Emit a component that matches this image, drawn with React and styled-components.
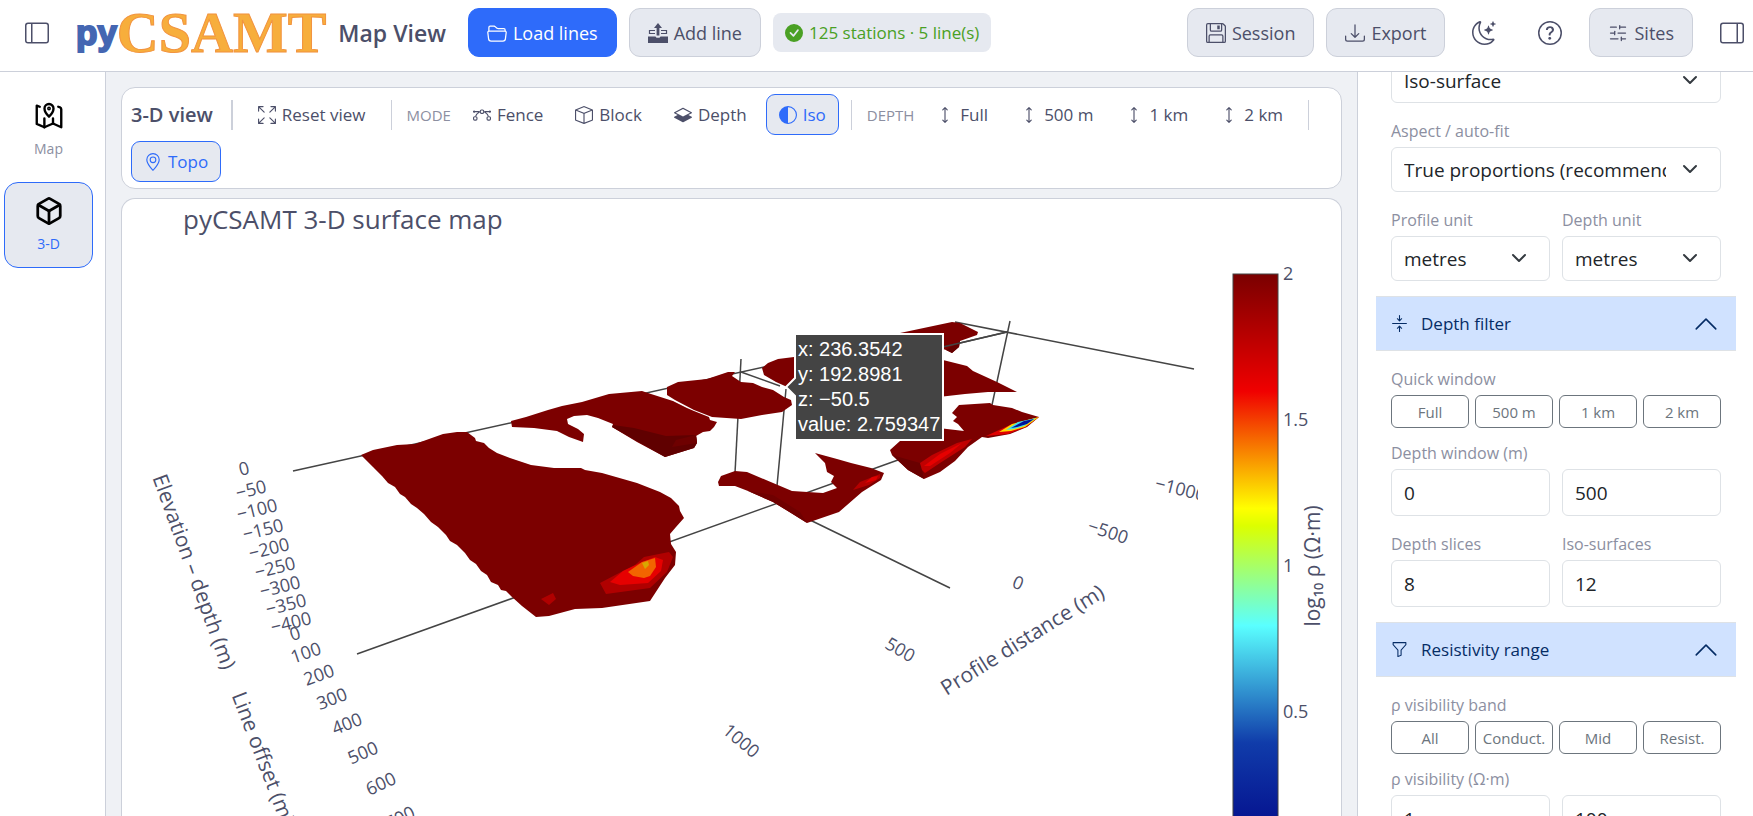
import React from 'react'
import styled, { createGlobalStyle, css } from 'styled-components'
import { SlidersHorizontal, Box } from 'lucide-react'
import {
  BsArrowsCollapse,
  BsArrowsFullscreen,
  BsArrowsVertical,
  BsBezier,
  BsBox,
  BsCheckCircleFill,
  BsChevronUp,
  BsCircleHalf,
  BsDownload,
  BsFloppy,
  BsFolder2Open,
  BsFunnel,
  BsGeoAlt,
  BsLayersHalf,
  BsLayoutSidebar,
  BsLayoutSidebarReverse,
  BsMoonStars,
  BsQuestionCircle
} from 'react-icons/bs'

let text = '#4c4f69'
let muted = '#8c8fa1'
let border = '#ccd0da'
let surface = '#e6e9f0'
let base = '#eff1f5'
let blue = '#2e6bfa'
let maroon = '#7c0000'

let GlobalStyle = createGlobalStyle`
  * {
    box-sizing: border-box;
  }

  body {
    margin: 0;
    background: ${base};
    color: ${text};
    font-family: 'Open Sans', 'Noto Sans', sans-serif;
    font-size: 17px;
  }

  button,
  input,
  select {
    font-family: inherit;
  }

  svg {
    display: block;
    flex-shrink: 0;
  }
`

let AddLineIcon = () => (
  <svg width="20" height="20" viewBox="0 0 20 20" fill="none" stroke="currentColor">
    <path d="M10 0l4 5h-2.600v7.500H8.600V5H6z" fill="currentColor" stroke="none" />
    <path d="M7 7.500H1.500v3H7M13 7.500h5.500v3H13" strokeWidth="1.200" />
    <path d="M0 13.500h7.500l1 1.200h3l1-1.200H20V20H0z" fill="currentColor" stroke="none" />
  </svg>
)

let MapIcon = () => (
  <svg width="30" height="30" viewBox="0 0 24 24" fill="none" stroke="#000" strokeWidth="1.9" strokeLinecap="round" strokeLinejoin="round">
    <path d="M4.6 4.6 2.2 3.7v14.6L8.3 21l6.9-3 6.6 3V6.6a1.6 1.6 0 0 0-1-1.5l-1.4-.5" />
    <path d="M8.3 14v7M15.2 14v4" />
    <path d="M12 12.5C9.8 10.4 8.4 8.4 8.4 6a3.6 3.6 0 0 1 7.2 0c0 2.4-1.4 4.4-3.6 6.5z" />
    <circle cx="12" cy="6" r=".6" />
  </svg>
)

let modes = [
  { name: 'Fence', Icon: BsBezier },
  { name: 'Block', Icon: BsBox },
  { name: 'Depth', Icon: BsLayersHalf },
  { name: 'Iso', Icon: BsCircleHalf, active: true }
]

let depths = ['Full', '500 m', '1 km', '2 km']
let bands = ['All', 'Conduct.', 'Mid', 'Resist.']

// x, y, rotation, label
let ticks = [
  [244, 469, -14, '0'],
  [251, 490, -14, '−50'],
  [257, 510, -14, '−100'],
  [263, 530, -14, '−150'],
  [269, 549, -14, '−200'],
  [275, 568, -14, '−250'],
  [280, 587, -14, '−300'],
  [286, 605, -14, '−350'],
  [291, 623, -14, '−400'],
  [295, 634, -18, '0'],
  [306, 653, -19, '100'],
  [319, 675, -20, '200'],
  [332, 699, -21, '300'],
  [347, 724, -22, '400'],
  [363, 753, -24, '500'],
  [381, 784, -25, '600'],
  [400, 818, -26, '700'],
  [741, 741, 40, '1000'],
  [900, 650, 30, '500'],
  [1018, 583, 22, '0'],
  [1108, 532, 18, '−500']
]

let axes = [
  'M293 471L800 359',
  'M930 350L1007 332',
  'M955 322L1194 369',
  'M1010 321L992 405',
  'M741 359L735 473',
  'M786 389L777 486',
  'M741 372L780 386',
  'M357 654L898 460',
  'M810 520L950 588'
]

let bodies = [
  'M361 455L373 450 397 445 415 444 443 434 457 432 467 432 475 438 476 441 484 443 489 448 497 453 510 458 531 465 554 468 581 468 585 470 602 473 637 483 660 492 671 498 679 506 680 511 684 518 676 527 670 534 671 544 676 552 675 565 665 578 650 601 602 608 575 609 549 616 536 617 522 606 512 597 506 591 501 590 498 585 491 582 487 575 481 571 476 564 470 560 465 553 457 545 450 541 446 535 438 527 431 522 424 514 417 508 411 504 405 497 400 494 395 487 388 483 382 476 373 467z',
  'M511 421L526 417 548 410 562 406 582 402 609 394 642 391 651 394 673 401 687 408 694 411 709 417 710 420 717 422 714 427 710 431 703 432 696 436 697 443 694 448 665 457 637 442 612 427 613 424 598 418 587 415 574 416 567 419 568 424 578 429 584 434 583 442 569 437 557 431 534 428 512 427z',
  'M667 387L678 382 707 379 728 372 735 372 732 376 741 382 753 383 762 387 773 390 784 397 791 400 792 405 782 412 762 415 741 419 712 417 694 410 675 400 667 395z',
  'M762 368L768 363 778 359 794 357 801 356 801 392 788 389 785 386 776 382 764 375z',
  'M900 333L952 322 960 323 968 327 978 332 977 335 960 341 959 347 952 353 946 350 940 348z',
  'M930 357L943 360 967 366 973 371 997 382 1017 392 988 392 965 394 930 398z',
  'M930 427L964 431 958 424 953 421 957 417 952 413 959 405 990 403 993 405 1012 408 1022 412 1039 417 1027 427 1010 434 988 438 982 437 968 447 955 461 940 472 924 479 908 470 892 455 890 450 900 441z',
  'M718 482L721 476 735 471 747 472 766 480 792 491 823 493 837 488 831 482 834 476 827 472 825 463 815 453 837 459 851 463 871 468 884 473 881 480 862 492 839 512 807 523 791 513 773 502 748 491 735 486 719 486z'
]

let facets = [
  ['#600000', 'M613 425L634 428 666 436 696 435 697 443 694 448 665 457 612 427z'],
  ['#6e0000', 'M676 440L696 435 697 443 672 447z'],
  ['#640000', 'M946 350L960 341 959 347 952 353z'],
  ['#700000', 'M748 491L773 495 800 512 807 523 791 513 773 502z'],
  ['#b00000', 'M600 583L621 572 635 565 644 557 669 552 673 557 667 572 650 588 606 594z'],
  ['#e60000', 'M610 582L623 571 640 563 655 557 663 560 661 571 648 583 620 585z'],
  ['#f26400', 'M628 572L642 562 655 558 656 567 650 576 644 578 633 576z'],
  ['#d9a800', 'M642 563L648 561 649 565 645 569z'],
  ['#b00000', 'M541 599L553 593 556 599 549 605z'],
  ['#6a0000', 'M892 455L920 463 922 470 924 479 908 470z'],
  ['#c00000', 'M920 463L932 455 957 443 972 439 965 447 940 463 925 473 922 470z'],
  ['#e60000', 'M924 466L940 454 962 443 950 453 930 466z'],
  ['#b40000', 'M853 490L860 482 880 474 880 478 869 485z'],
  ['#e00000', 'M865 483L872 477 878 476 876 480z'],
  ['#e00000', 'M986 436L1010 425 1039 417 1026 427 1008 434z'],
  ['#ffd800', 'M999 432L1012 424 1039 417 1025 427 1011 431z'],
  ['#3fe0e8', 'M1006 430L1018 422 1036 418 1024 426 1014 429z'],
  ['#00109a', 'M1011 428L1024 421 1034 419 1027 424 1017 427z']
]

let hoverLines = ['x: 236.3542', 'y: 192.8981', 'z: −50.5', 'value: 2.759347']

let scale = [
  [0, 'rgb(122, 0, 0)'],
  [0.2, 'rgb(240, 0, 0)'],
  [0.4, 'rgb(255, 255, 0)'],
  [0.43, 'rgb(220, 255, 0)'],
  [0.6, 'rgb(90, 255, 255)'],
  [0.8, 'rgb(16, 60, 170)'],
  [1, 'rgb(0, 0, 131)']
]

let Plot = () => (
  <StyledPlot viewBox="122 199 1219 617" role="img" aria-label="3-D surface map">
    <defs>
      <linearGradient id="jet" x1="0" y1="0" x2="0" y2="1">
        {scale.map(([offset, color]) => <stop key={offset} offset={offset} stopColor={color} />)}
      </linearGradient>
      <clipPath id="scene">
        <rect x="122" y="199" width="1076" height="700" />
      </clipPath>
    </defs>
    <text className="title" x="183" y="229">pyCSAMT 3-D surface map</text>
    <g clipPath="url(#scene)">
      {axes.map(d => <path key={d} d={d} stroke="#444" strokeWidth="1.5" />)}
      {bodies.map(d => <path key={d} d={d} fill={maroon} />)}
      {facets.map(([fill, d]) => <path key={d} d={d} fill={fill} />)}
      <path d="M930 350L1007 332" stroke="#444" strokeWidth="1.5" />
      {ticks.map(([x, y, angle, label]) => (
        <text className="tick" key={x + label} transform={`translate(${x} ${y}) rotate(${angle})`} textAnchor="middle" dy="6">{label}</text>
      ))}
      <text className="tick" transform="translate(1154 489) rotate(14)">−1000</text>
      <text className="axis" transform="translate(193 572) rotate(70)" textAnchor="middle" dy="6">Elevation – depth (m)</text>
      <text className="axis" transform="translate(237 693) rotate(69)" dy="6">Line offset (m)</text>
      <text className="axis" transform="translate(1023 641) rotate(-32)" textAnchor="middle" dy="6">Profile distance (m)</text>
    </g>
    <rect x="1233" y="274" width="45" height="586" fill="url(#jet)" stroke="#444" />
    {['2', '1.5', '1', '0.5'].map((label, i) => (
      <text className="tick" key={label} x="1283" y={280 + i * 146}>{label}</text>
    ))}
    <text className="axis" transform="translate(1320 566) rotate(-90)" textAnchor="middle">log₁₀ ρ (Ω·m)</text>
    <path d="M795 334H943V440H795V396L786 387 795 378Z" fill="#444" stroke="#fff" strokeWidth="2" />
    {hoverLines.map((line, i) => (
      <text className="hover" key={line} x="798" y={356 + i * 25}>{line}</text>
    ))}
  </StyledPlot>
)

let SelectField = ({ id, label, value }) => (
  <Field>
    {label ? <Label htmlFor={id}>{label}</Label> : null}
    <SelectWrapper>
      <Select id={id} defaultValue={value} aria-label={label || 'Render mode'}>
        <option>{value}</option>
      </Select>
      <svg width="16" height="16" viewBox="0 0 16 16" fill="none" stroke="#343a40" strokeWidth="2" strokeLinecap="round" strokeLinejoin="round">
        <path d="m2 5 6 6 6-6" />
      </svg>
    </SelectWrapper>
  </Field>
)

let InputField = ({ id, label, value }) => (
  <Field>
    <Label htmlFor={id}>{label}</Label>
    <Input id={id} defaultValue={value} />
  </Field>
)

let RangeField = ({ id, label, from, to }) => (
  <Field $tight>
    <Label htmlFor={id}>{label}</Label>
    <Pair>
      <Input id={id} defaultValue={from} />
      <Input defaultValue={to} aria-label={`${label} maximum`} />
    </Pair>
  </Field>
)

let Presets = ({ label, items }) => (
  <Field role="group" aria-label={label}>
    <Label as="span">{label}</Label>
    <PresetRow>
      {items.map(item => <Preset key={item}>{item}</Preset>)}
    </PresetRow>
  </Field>
)

let App = () => (
  <Page>
    <GlobalStyle />
    <Header>
      <IconButton aria-label="Toggle navigation"><BsLayoutSidebar size={24} /></IconButton>
      <Logo><span>py</span>CSAMT</Logo>
      <Title>Map View</Title>
      <HeaderButton $primary><BsFolder2Open size={20} />Load lines</HeaderButton>
      <HeaderButton><AddLineIcon />Add line</HeaderButton>
      <Status><BsCheckCircleFill size={18} />125 stations · 5 line(s)</Status>
      <Actions>
        <HeaderButton><BsFloppy size={20} />Session</HeaderButton>
        <HeaderButton><BsDownload size={20} />Export</HeaderButton>
        <IconButton aria-label="Dark theme"><BsMoonStars size={24} /></IconButton>
        <IconButton aria-label="Help"><BsQuestionCircle size={24} /></IconButton>
        <HeaderButton><SlidersHorizontal size={20} strokeWidth={1.5} />Sites</HeaderButton>
        <IconButton $edge aria-label="Toggle settings"><BsLayoutSidebarReverse size={24} /></IconButton>
      </Actions>
    </Header>
    <Body>
      <Nav>
        <NavItem href="#map"><MapIcon />Map</NavItem>
        <NavItem href="#3d" $active><Box size={30} color="#000" strokeWidth={2.2} />3-D</NavItem>
      </Nav>
      <Main>
        <Toolbar>
          <ToolbarTitle>3-D view</ToolbarTitle>
          <Divider $wide />
          <Tool><BsArrowsFullscreen size={18} />Reset view</Tool>
          <Divider />
          <GroupLabel>MODE</GroupLabel>
          {modes.map(({ name, Icon, active }) => (
            <Tool key={name} $active={active}><Icon size={18} />{name}</Tool>
          ))}
          <Divider />
          <GroupLabel>DEPTH</GroupLabel>
          {depths.map(depth => (
            <Tool key={depth}><BsArrowsVertical size={18} />{depth}</Tool>
          ))}
          <Divider />
          <Tool $active><BsGeoAlt size={18} />Topo</Tool>
        </Toolbar>
        <PlotCard>
          <Plot />
        </PlotCard>
      </Main>
      <Panel>
        <PanelContent>
          <Section>
            <SelectField id="render" value="Iso-surface" />
            <SelectField id="aspect" label="Aspect / auto-fit" value="True proportions (recommended)" />
            <Pair>
              <SelectField id="profile-unit" label="Profile unit" value="metres" />
              <SelectField id="depth-unit" label="Depth unit" value="metres" />
            </Pair>
          </Section>
          <SectionHeader><BsArrowsCollapse size={17} />Depth filter<BsChevronUp size={26} /></SectionHeader>
          <Section>
            <Presets label="Quick window" items={depths} />
            <RangeField id="depth-window" label="Depth window (m)" from="0" to="500" />
            <Pair>
              <InputField id="slices" label="Depth slices" value="8" />
              <InputField id="surfaces" label="Iso-surfaces" value="12" />
            </Pair>
          </Section>
          <SectionHeader><BsFunnel size={17} />Resistivity range<BsChevronUp size={26} /></SectionHeader>
          <Section>
            <Presets label="ρ visibility band" items={bands} />
            <RangeField id="rho" label="ρ visibility (Ω·m)" from="1" to="100" />
          </Section>
        </PanelContent>
      </Panel>
    </Body>
  </Page>
)

let Page = styled.div`
  display: flex;
  flex-direction: column;
  height: 100vh;
  overflow: hidden;
`

let Header = styled.header`
  align-items: center;
  background: #fff;
  border-bottom: 1px solid ${border};
  display: flex;
  flex-shrink: 0;
  gap: 12px;
  padding: 8px 0 14px 10px;
  white-space: nowrap;
`

let Logo = styled.div`
  align-items: center;
  color: #f7ae3c;
  display: flex;
  font: bold 58px 'Liberation Serif', serif;
  line-height: 49px;
  -webkit-text-stroke: 1px #f2933f;

  span {
    color: #4466b2;
    font: bold 35px 'Liberation Sans', sans-serif;
    -webkit-text-stroke: 2px #4466b2;
  }
`

let Title = styled.h1`
  font-size: 23px;
  font-weight: 600;
  margin: 0 10px 0 0;
`

let HeaderButton = styled.button`
  align-items: center;
  background: ${surface};
  border: 1px solid ${border};
  border-radius: 11px;
  color: ${text};
  display: flex;
  font-size: 18px;
  gap: 6px;
  height: 49px;
  padding: 0 18px;

  ${({ $primary }) => $primary && css`
    background: ${blue};
    border-color: ${blue};
    color: #fff;
  `}
`

let IconButton = styled.button`
  background: none;
  border: 0;
  color: ${text};
  padding: 12px ${({ $edge }) => $edge ? '9px' : '15px'} 12px 15px;
`

let Status = styled.div`
  align-items: center;
  background: ${surface};
  border-radius: 8px;
  color: #4aa024;
  display: flex;
  font-size: 17px;
  gap: 6px;
  height: 39px;
  padding: 0 12px;
`

let Actions = styled.div`
  align-items: center;
  display: flex;
  gap: 12px;
  margin-left: auto;
`

let Body = styled.div`
  display: flex;
  flex: 1;
  min-height: 0;
`

let Nav = styled.nav`
  background: #fff;
  border-right: 1px solid ${border};
  display: flex;
  flex-direction: column;
  flex-shrink: 0;
  gap: 9px;
  padding: 15px 12px 0 4px;
  width: 106px;
`

let NavItem = styled.a`
  align-items: center;
  border: 1px solid transparent;
  border-radius: 14px;
  color: ${muted};
  display: flex;
  flex-direction: column;
  font-size: 14px;
  gap: 8px;
  line-height: 20px;
  padding: 13px 0;
  text-decoration: none;

  ${({ $active }) => $active && css`
    background: ${surface};
    border-color: ${blue};
    color: ${blue};
  `}
`

let Main = styled.main`
  display: flex;
  flex: 1;
  flex-direction: column;
  gap: 9px;
  min-width: 0;
  padding: 15px 15px 0;
`

let Toolbar = styled.div`
  align-items: center;
  background: #fff;
  border: 1px solid ${border};
  border-radius: 14px;
  display: flex;
  flex-wrap: wrap;
  gap: 6px;
  padding: 6px 9px;
`

let ToolbarTitle = styled.h2`
  font-size: 20px;
  font-weight: 600;
  margin: 0 6px 0 0;
`

let Divider = styled.span`
  background: ${border};
  height: 30px;
  margin: 0 6px;
  width: ${({ $wide }) => $wide ? '2px' : '1px'};
`

let GroupLabel = styled.span`
  color: ${muted};
  font-size: 15px;
  padding: 0 3px;
`

let Tool = styled.button`
  align-items: center;
  background: none;
  border: 1px solid transparent;
  border-radius: 9px;
  color: ${text};
  display: flex;
  font-size: 17px;
  gap: 6px;
  height: 41px;
  padding: 0 12px;

  ${({ $active }) => $active && css`
    background: ${surface};
    border-color: ${blue};
    color: ${blue};
  `}
`

let PlotCard = styled.section`
  background: #fff;
  border: 1px solid ${border};
  border-bottom: 0;
  border-radius: 14px 14px 0 0;
  flex: 1;
  min-height: 0;
  overflow: hidden;
`

let StyledPlot = styled.svg`
  height: auto;
  width: 100%;

  text {
    fill: ${text};
  }

  .title {
    font-size: 26px;
  }

  .tick {
    font-size: 18px;
  }

  .axis {
    font-size: 21px;
  }

  .hover {
    fill: #fff;
    font-family: 'Liberation Sans', Arial, sans-serif;
    font-size: 20px;
  }
`

let Panel = styled.aside`
  background: #fff;
  border-left: 1px solid ${border};
  flex-shrink: 0;
  overflow: hidden;
  width: 396px;
`

/* the panel sits part-way through its scroll */
let PanelContent = styled.div`
  margin: -30px 17px 0 18px;
`

let Section = styled.div`
  display: flex;
  flex-direction: column;
  padding: 0 15px 15px;
`

let SectionHeader = styled.button`
  align-items: center;
  background: #d0e2ff;
  border: 1px solid #dee2e6;
  border-width: 1px 0;
  color: #052c65;
  display: flex;
  font-size: 17px;
  gap: 13px;
  height: 55px;
  padding: 0 17px 0 15px;
  width: 100%;

  svg:last-child {
    margin-left: auto;
  }
`

let Field = styled.div`
  display: flex;
  flex: 1;
  flex-direction: column;
  min-width: 0;
  padding-top: ${({ $tight }) => $tight ? '13px' : '16px'};
`

let Label = styled.label`
  color: ${muted};
  font-size: 16px;
  line-height: 24px;
  margin-bottom: 4px;
`

let Pair = styled.div`
  display: flex;
  gap: 12px;
`

let Input = styled.input`
  background: #fff;
  border: 1px solid #dee2e6;
  border-radius: 6px;
  color: #212529;
  font-size: 19px;
  height: 47px;
  min-width: 0;
  padding: 0 12px;
  width: 100%;
`

let SelectWrapper = styled.div`
  position: relative;

  svg {
    pointer-events: none;
    position: absolute;
    right: 23px;
    top: 14px;
  }
`

let Select = styled.select`
  appearance: none;
  background: #fff;
  border: 1px solid #dee2e6;
  border-radius: 6px;
  color: #212529;
  font-size: 19px;
  height: 45px;
  padding: 0 54px 0 12px;
  width: 100%;
`

let PresetRow = styled.div`
  display: flex;
  gap: 6px;
`

let Preset = styled.button`
  background: none;
  border: 1px solid #6c757d;
  border-radius: 6px;
  color: #6c757d;
  flex: 1 1 0;
  font-size: 15px;
  height: 33px;
  padding: 0 6px;
`

export default App
